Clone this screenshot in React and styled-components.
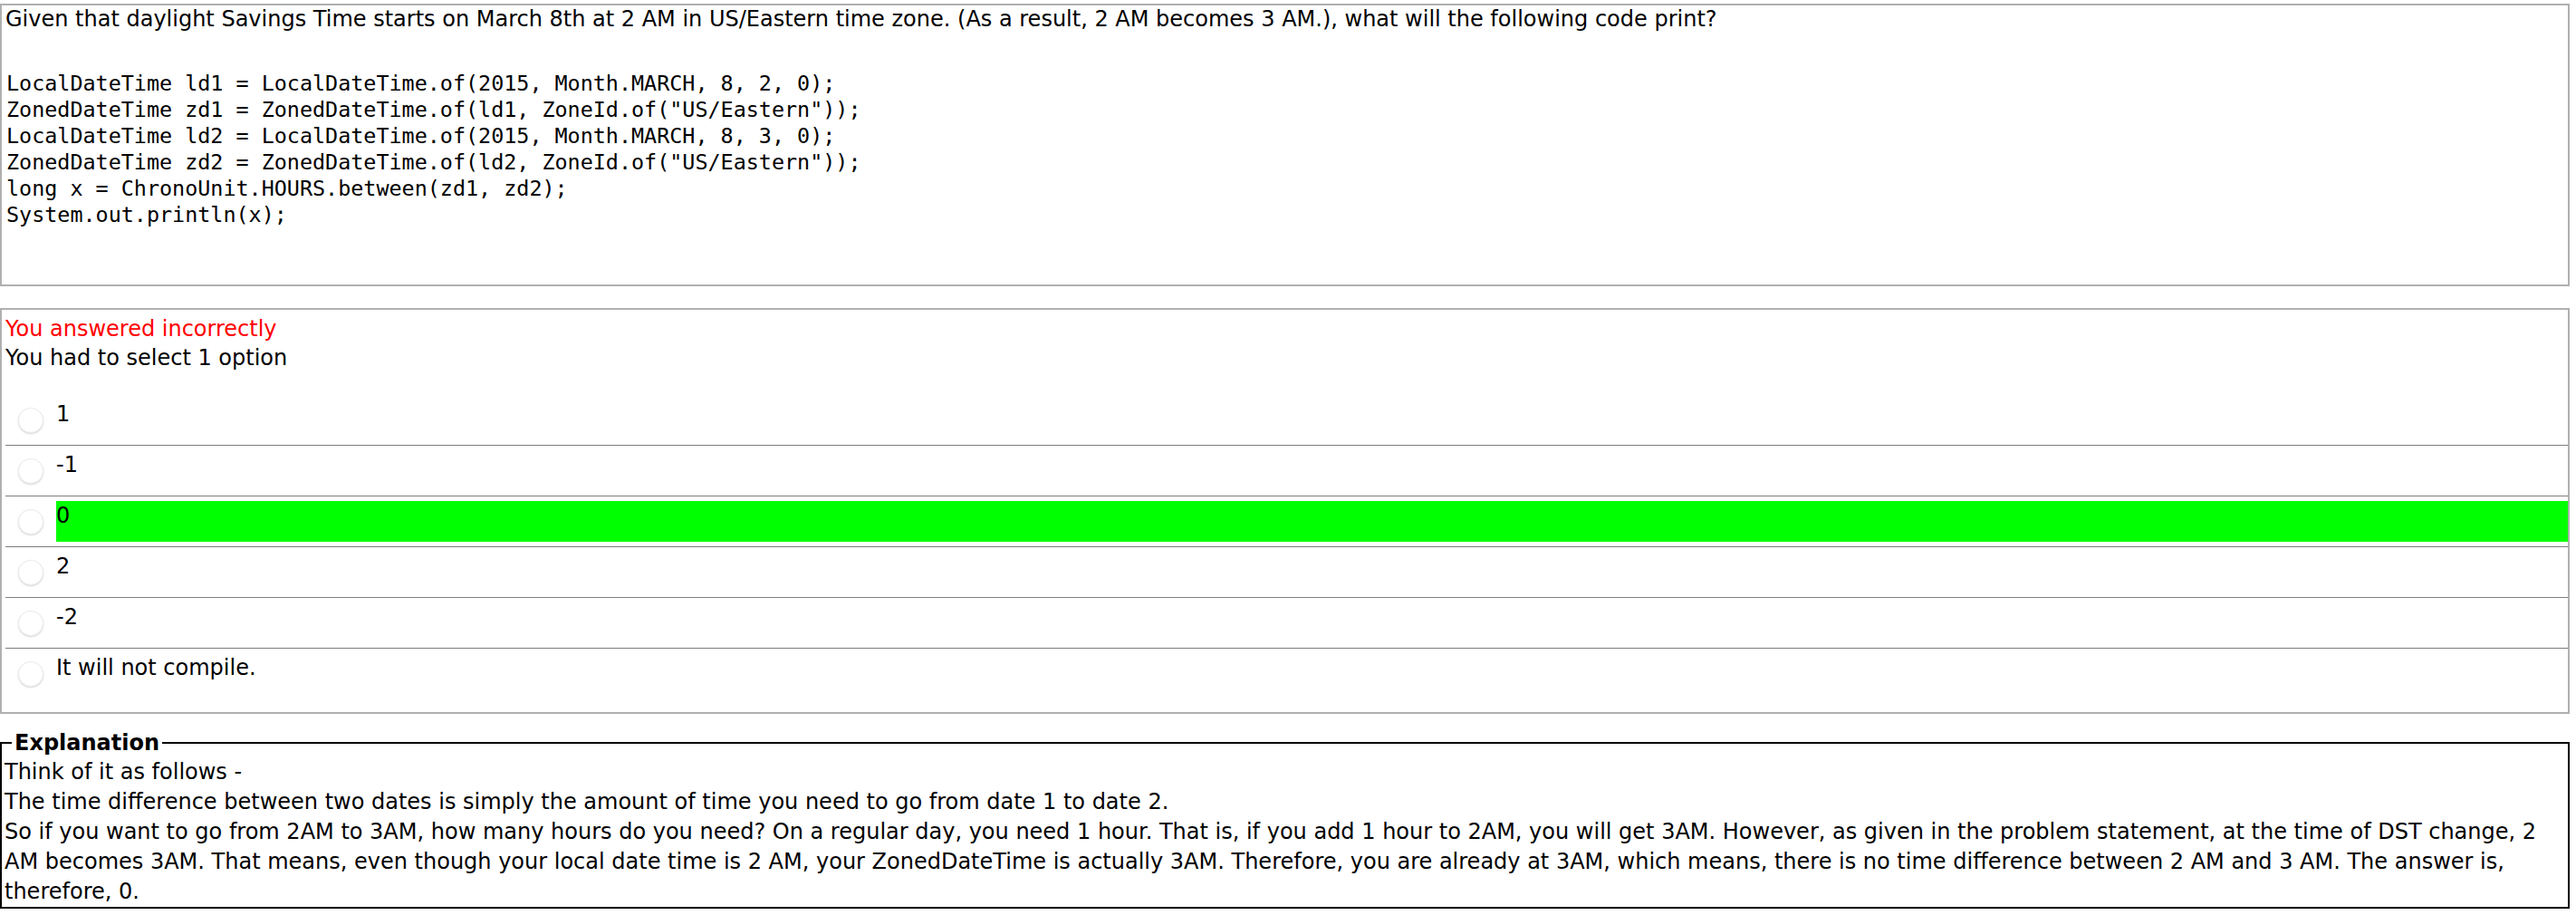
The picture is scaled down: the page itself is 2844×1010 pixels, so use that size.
import styled, { createGlobalStyle } from 'styled-components';

const GlobalStyle = createGlobalStyle`
    body {
        margin: 0;
        background: #fff;
        font-family: "DejaVu Sans", Verdana, sans-serif;
        font-size: 24px;
        color: #000;
    }
`

const Page = styled.div`
    padding: 4px 7px 0 0;
`

const QuestionBox = styled.div`
    border: 2px solid #b0b0b0;
    padding: 1px 4px 62px;
`

const QuestionText = styled.div`
    line-height: 28px;
`

const Code = styled.pre`
    margin: 43px 0 0 1px;
    font-family: "DejaVu Sans Mono", Menlo, monospace;
    font-size: 23.4px;
    line-height: 29px;
`

const AnswerBox = styled.div`
    margin-top: 24px;
    border: 2px solid #b0b0b0;
    padding: 5px 0 14px 0;
`

const Status = styled.div`
    line-height: 32px;
    padding-left: 4px;
    color: ${p => p.$wrong ? '#ff0000' : '#000'};
`

const Options = styled.div`
    margin: 25px 0 0 4px;
`

const OptionRow = styled.div`
    display: flex;
    align-items: flex-start;
    height: 56px;
    padding-top: 5px;
    box-sizing: border-box;
    border-bottom: 1px solid #7d7d7d;

    &:last-child {
        border-bottom: none;
    }
`

const Radio = styled.span`
    flex: none;
    width: 28px;
    height: 28px;
    margin: 9px 14px 0 14px;
    border-radius: 50%;
    background: #fff;
    border: 1px solid #ececec;
    box-sizing: border-box;
    box-shadow: 0 1px 2px rgba(0, 0, 0, 0.16);
`

const OptionLabel = styled.div`
    flex: 1;
    height: 45px;
    line-height: 33px;
    background: ${p => p.$correct ? '#00ff00' : 'transparent'};
`

const Explanation = styled.fieldset`
    margin: 16px 0 0 0;
    border: 2px solid #000;
    padding: 0 2px 0 3px;
    min-width: 0;
`

const Legend = styled.legend`
    font-weight: bold;
    line-height: 32px;
    margin-left: 8px;
    padding: 0 3px;
`

const ExplanationText = styled.div`
    line-height: 33px;
`

const options = [
    { text: '1' },
    { text: '-1' },
    { text: '0', correct: true },
    { text: '2' },
    { text: '-2' },
    { text: 'It will not compile.' },
]

const code = `LocalDateTime ld1 = LocalDateTime.of(2015, Month.MARCH, 8, 2, 0);
ZonedDateTime zd1 = ZonedDateTime.of(ld1, ZoneId.of("US/Eastern"));
LocalDateTime ld2 = LocalDateTime.of(2015, Month.MARCH, 8, 3, 0);
ZonedDateTime zd2 = ZonedDateTime.of(ld2, ZoneId.of("US/Eastern"));
long x = ChronoUnit.HOURS.between(zd1, zd2);
System.out.println(x);`

const App = () => {
    return (
        <Page>
            <GlobalStyle />
            <QuestionBox>
                <QuestionText>
                    Given that daylight Savings Time starts on March 8th at 2 AM in US/Eastern time zone. (As a result, 2 AM becomes 3 AM.), what will the following code print?
                </QuestionText>
                <Code>{code}</Code>
            </QuestionBox>

            <AnswerBox>
                <Status $wrong>You answered incorrectly</Status>
                <Status>You had to select 1 option</Status>
                <Options>
                    {options.map((o, idx) => (
                        <OptionRow key={idx}>
                            <Radio />
                            <OptionLabel $correct={o.correct}>{o.text}</OptionLabel>
                        </OptionRow>
                    ))}
                </Options>
            </AnswerBox>

            <Explanation>
                <Legend>Explanation</Legend>
                <ExplanationText>
                    Think of it as follows -<br />
                    The time difference between two dates is simply the amount of time you need to go from date 1 to date 2.<br />
                    So if you want to go from 2AM to 3AM, how many hours do you need? On a regular day, you need 1 hour. That is, if you add 1 hour to 2AM, you will get 3AM. However, as given in the problem statement, at the time of DST change, 2 AM becomes 3AM. That means, even though your local date time is 2 AM, your ZonedDateTime is actually 3AM. Therefore, you are already at 3AM, which means, there is no time difference between 2 AM and 3 AM. The answer is, therefore, 0.
                </ExplanationText>
            </Explanation>
        </Page>
    )
}

export default App
